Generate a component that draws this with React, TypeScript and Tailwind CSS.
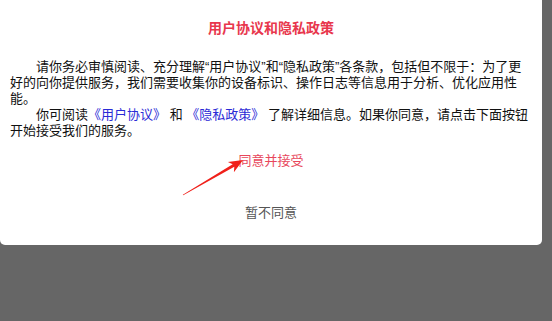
export default function App() {
  return (
    <div className="relative h-[321px] w-[552px] overflow-hidden bg-[#666666] font-['Liberation_Sans','Noto_Sans_CJK_SC',sans-serif]">
      <div className="flex w-[542px] flex-col rounded-b-[5px] bg-white px-[10px] pt-[18px] pb-[22px]">
        <h1 className="text-center text-[14px] font-bold leading-[20px] text-[#e8374d]">用户协议和隐私政策</h1>

        <div className="mt-[21px] text-[13px] leading-[16px] text-[#111]">
          <p className="indent-[26px]">
            请你务必审慎阅读、充分理解“用户协议”和“隐私政策”各条款，包括但不限于：为了更好的向你提供服务，我们需要收集你的设备标识、操作日志等信息用于分析、优化应用性能。
          </p>
          <p className="indent-[26px]">
            你可阅读<a className="text-[#2b2bd6]">《用户协议》</a> 和 <a className="text-[#2b2bd6]">《隐私政策》</a> 了解详细信息。如果你同意，请点击下面按钮开始接受我们的服务。
          </p>
        </div>

        <button className="mx-auto mt-[12px] text-[13px] leading-[20px] text-[#e8475c]">同意并接受</button>
        <button className="mx-auto mt-[32px] text-[13px] leading-[20px] text-[#555]">暂不同意</button>
      </div>

      {/* annotation arrow */}
      <svg className="pointer-events-none absolute top-0 left-0" width="552" height="321" viewBox="0 0 552 321">
        <polygon
          fill="#f0201a"
          points="243,160 233.9,172.3 234.3,166.8 183.2,195.3 182.8,194.7 232.7,164.2 227.9,161.9"
        />
      </svg>
    </div>
  );
}
